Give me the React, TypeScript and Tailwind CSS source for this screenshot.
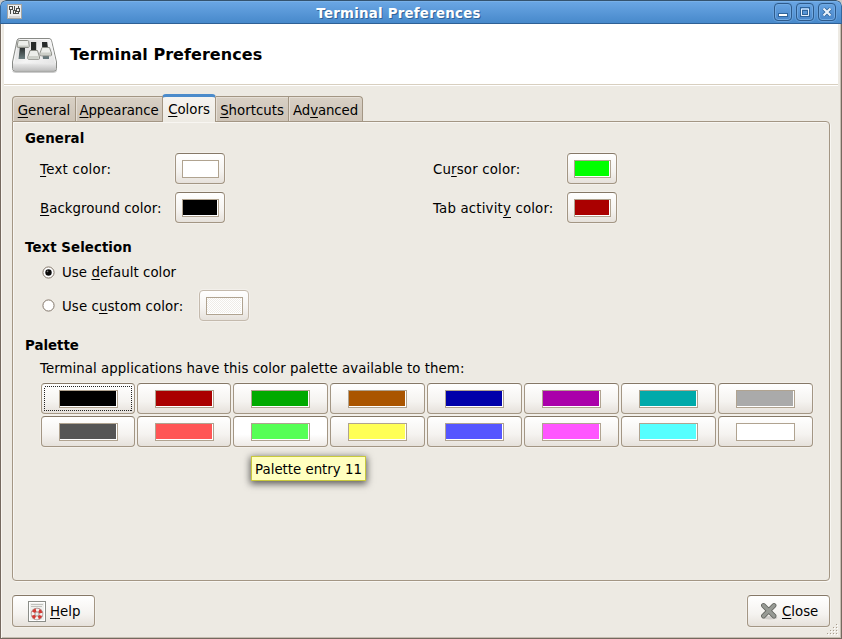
import React from "react";

type LabelProps = { text: string; hot?: number; low?: boolean; className?: string };

/** Text with one underlined access key. */
function Label({ text, hot = 0, low = false, className = "" }: LabelProps) {
  return (
    <span className={`whitespace-pre pt-[2px] ${className}`}>
      {text.slice(0, hot)}
      <span
        className={`underline decoration-1 [text-decoration-skip-ink:none] ${low ? "underline-offset-[4px]" : "underline-offset-[2px]"}`}
      >
        {text[hot]}
      </span>
      {text.slice(hot + 1)}
    </span>
  );
}

const buttonFace =
  "flex shrink-0 items-center rounded-[4px] border border-[#a39684] border-t-[#857867] bg-linear-to-b from-white via-[#f5f3f0] via-60% to-[#e6e1db] shadow-[0_0_0_1px_#f3f0eb]";

type SwatchProps = { color: string; name: string; className?: string; wide?: boolean; focused?: boolean; hover?: boolean; disabled?: boolean };

function ColorButton({ color, name, className = "", wide, focused, hover, disabled }: SwatchProps) {
  return (
    <button
      aria-label={name}
      disabled={disabled}
      className={`${buttonFace} relative h-[31px] ${wide ? "pl-[17px]" : "w-[50px] pl-[6px]"} ${hover ? "to-[#eeeae6] via-white" : ""} ${disabled ? "border-[#c4baad] border-t-[#c4baad]" : ""} ${className}`}
    >
      {focused && (
        <svg className="absolute left-[2px] top-[2px]" width="88" height="25" shapeRendering="crispEdges">
          <rect x="0.5" y="0.5" width="87" height="24" fill="none" stroke="#222" strokeDasharray="1 1" />
        </svg>
      )}
      <span
        className={`flex h-[18px] border border-[#b0a390] bg-white pr-px pb-px ${wide ? "w-[59px]" : "w-[37px]"}`}
      >
        <span
          className={`flex-1 ${disabled ? "bg-[repeating-conic-gradient(#efece7_0_25%,#ffffff_0_50%)] bg-[length:2px_2px]" : ""}`}
          style={disabled ? undefined : { backgroundColor: color }}
        />
      </span>
    </button>
  );
}

function Radio({ checked }: { checked?: boolean }) {
  return (
    <svg width="13" height="13" viewBox="0 0 13 13" className="shrink-0">
      <circle cx="6.5" cy="6.5" r="6.2" fill="#faf8f5" />
      <circle cx="6.5" cy="6.5" r="5.6" fill="#fff" stroke="#7d7163" strokeWidth="1" />
      {checked && <circle cx="6.5" cy="6.5" r="3.2" fill="#0b0b0b" />}
      {checked && <circle cx="5.5" cy="5.4" r=".8" fill="#777" />}
    </svg>
  );
}

function MixerIcon() {
  return (
    <svg width="48" height="40" viewBox="0 0 48 40" className="mt-[2px] shrink-0">
      <defs>
        <linearGradient id="top" x1="0" y1="0" x2="1" y2="1">
          <stop offset="0" stopColor="#cfcfcf" />
          <stop offset=".5" stopColor="#f4f4f4" />
          <stop offset="1" stopColor="#dedede" />
        </linearGradient>
        <linearGradient id="front" x1="0" y1="0" x2="0" y2="1">
          <stop offset="0" stopColor="#e9e9e9" />
          <stop offset="1" stopColor="#c0c0c0" />
        </linearGradient>
        <linearGradient id="slot" x1="0" y1="0" x2="0" y2="1">
          <stop offset="0" stopColor="#202322" />
          <stop offset="1" stopColor="#6e8082" />
        </linearGradient>
      </defs>
      <path d="M1 36h44l1-2v2q-1 2-4 2H5q-3 0-4-2z" fill="#000" opacity=".2" />
      <path
        d="M8.500 3.500h29.500q2 0 2.500 2L45.500 27v6.500q0 2.500-2.500 2.500h-39Q1.500 36 1.500 33.500V27L6 5.500q.5-2 2.500-2z"
        fill="url(#top)"
        stroke="#888a86"
      />
      <path d="M2 28.500h43v5q0 2-2 2h-39q-2 0-2-2z" fill="url(#front)" />
      <path d="M2.700 28 7.300 6q.3-1.500 1.600-1.500H37.700q1.500 0 1.900 1.500l4.900 22" fill="none" stroke="#fafafa" opacity=".8" />
      <path d="M9 11h5v13H7.500z" fill="url(#slot)" />
      <path d="M20 7h5.200v10h-5.200z" fill="#262a29" />
      <path d="M31 7h5.200l1 8h-6z" fill="#262a29" />
      <path d="M31.500 20h6.500v4h-6z" fill="#66787b" />
      <path d="M8 5.500h8.500q1 0 1.200 1l.5 4.500q0 1.500-1 1.500h-10q-1.300 0-1-1.500l.8-4.500q.2-1 1-1z" fill="#eceeea" stroke="#8c8e87" />
      <path d="M7 10.500h10.600v1.500H7z" fill="#c7cac3" />
      <path d="M19 15.500h7.500l2 6.500v1.500q0 .8-1 .8h-9.700q-1 0-1-.8V22z" fill="#eceeea" stroke="#8c8e87" />
      <path d="M17.300 21h10.400v2.700H17.300z" fill="#cdd0c9" />
      <path d="M31 12.500h7.500l2 5.700v1.800q0 .8-1 .8H30q-1 0-1-.8v-1.800z" fill="#eceeea" stroke="#8c8e87" />
      <path d="M29.600 17.500h10.400v2.700H29.600z" fill="#cdd0c9" />
    </svg>
  );
}

function TitleIcon() {
  return (
    <svg width="16" height="16" viewBox="0 0 16 16" shapeRendering="crispEdges">
      <rect x=".5" y=".5" width="14" height="14" fill="#eee" stroke="#a5a5a2" />
      <path d="M2 12h11v2H2z" fill="#d6d6d6" />
      <path d="M2.500 2.500h3v3h-3zM6.500 6.500h2v3h-2zM9.500 4.500h3v3h-3zM3.500 6v4M7.500 2v4M11.500 2v2M11.500 8v2M9 9.500h3" fill="none" stroke="#484a47" />
    </svg>
  );
}

function WindowButton({ name, children }: { name: string; children: React.ReactNode }) {
  return (
    <button
      aria-label={name}
      className="size-[18px] rounded-[4px] border border-[#2d5a8b] bg-linear-to-b from-[#67a4e2] to-[#4a87ca] shadow-[inset_0_0_0_1px_#70a9e2,0_0_0_1px_#66a0dc]"
    >
      <svg width="16" height="16" viewBox="0 0 16 16" fill="none">
        {children}
      </svg>
    </button>
  );
}

function HelpIcon() {
  return (
    <svg width="18" height="21" viewBox="0 0 18 21">
      <rect x=".5" y=".5" width="17" height="20" fill="#f0f0ee" stroke="#8b8d88" />
      <rect x="1.500" y="1.500" width="15" height="18" fill="none" stroke="#fff" />
      <path d="M3 3.500h12M3 5.500h11" stroke="#bbbcb8" strokeWidth=".9" />
      <circle cx="9" cy="13" r="4" fill="none" stroke="#a08482" strokeWidth="4.400" />
      <circle cx="9" cy="13" r="4" fill="none" stroke="#f6f1f0" strokeWidth="3.200" />
      <circle cx="9" cy="13" r="4" fill="none" stroke="#d33a34" strokeWidth="3.200" strokeDasharray="3.2 3.083" strokeDashoffset="-1.540" />
      <circle cx="9" cy="13" r="2" fill="#f0f0ee" stroke="#a08482" strokeWidth=".7" />
    </svg>
  );
}

function CloseIcon() {
  return (
    <svg width="18" height="18" viewBox="0 0 18 18">
      <ellipse cx="10" cy="15.800" rx="7.500" ry="1.700" fill="#000" opacity=".13" />
      <path d="M3.500 3.500l10.500 10.500M14 3.500L3.500 14" stroke="#5e605b" strokeWidth="4.800" strokeLinecap="round" />
      <path d="M3.500 3.500l10.500 10.500M14 3.500L3.500 14" stroke="#979a94" strokeWidth="3.200" strokeLinecap="round" />
    </svg>
  );
}

const tabFace =
  "flex h-[25px] items-center justify-center border border-b-0 border-[#a39684] bg-linear-to-b from-[#d8d0c5] to-[#cdc3b6] shadow-[inset_1px_1px_0_#e5ded5]";

const palette: [string, string][][] = [
  [
    ["#000000", "Palette entry 1"],
    ["#aa0000", "Palette entry 2"],
    ["#00aa00", "Palette entry 3"],
    ["#aa5500", "Palette entry 4"],
    ["#0000aa", "Palette entry 5"],
    ["#aa00aa", "Palette entry 6"],
    ["#00aaaa", "Palette entry 7"],
    ["#aaaaaa", "Palette entry 8"],
  ],
  [
    ["#555555", "Palette entry 9"],
    ["#ff5555", "Palette entry 10"],
    ["#55ff55", "Palette entry 11"],
    ["#ffff55", "Palette entry 12"],
    ["#5555ff", "Palette entry 13"],
    ["#ff55ff", "Palette entry 14"],
    ["#55ffff", "Palette entry 15"],
    ["#ffffff", "Palette entry 16"],
  ],
];

export default function App() {
  return (
    <div className="h-[639px] w-[842px] overflow-hidden bg-[#c9c9c9] font-['DejaVu_Sans',sans-serif] text-[13.333px] leading-[16px] text-black">
      <div className="flex h-full flex-col overflow-hidden rounded-t-[6px] bg-[#edeae3]">
        <header className="relative flex h-[24px] shrink-0 items-center justify-between rounded-t-[6px] border border-t-[#34536f] border-x-[#34679c] border-b-[#2f6095] bg-linear-to-b from-[#6ba7e5] to-[#4789cb] pr-[5px] pl-[6px] shadow-[inset_0_1px_0_#78b0e8]">
          <TitleIcon />
          <h1 className="absolute inset-x-0 left-[-45px] top-[5px] text-center font-bold tracking-[0.25px] text-white [text-shadow:1px_1px_0_#316397]">
            Terminal Preferences
          </h1>
          <div className="flex gap-[4px]">
            <WindowButton name="Minimize">
              <rect x="3.500" y="9.500" width="9" height="3" fill="#fff" stroke="#2f649b" />
            </WindowButton>
            <WindowButton name="Maximize">
              <rect x="3.500" y="3.500" width="9" height="9" stroke="#2f649b" />
              <path d="M4.500 5h7v6.500h-7z" stroke="#e8f1fb" />
              <rect x="5.500" y="6.500" width="5" height="4" stroke="#2f649b" />
            </WindowButton>
            <WindowButton name="Close window">
              <path d="M4.500 4.500l7 7M11.500 4.500l-7 7" stroke="#2f649b" strokeWidth="3.800" />
              <path d="M4.500 4.500l7 7M11.500 4.500l-7 7" stroke="#eaf2fc" strokeWidth="2.200" />
            </WindowButton>
          </div>
        </header>

        <div className="flex min-h-0 flex-1 flex-col border border-t-0 border-[#75695f] shadow-[inset_1px_0_0_#f9f6f1,inset_-1px_-1px_0_#c6beb2]">
          <div className="mr-[3px] ml-[3px] flex h-[61px] shrink-0 items-center border-b border-[#d8cfbf] bg-white pl-[7px] shadow-[0_1px_0_#fff]">
            <MixerIcon />
            <h2 className="ml-[11px] pt-[2px] text-[16px] leading-[20px] font-bold tracking-[0.05px]">Terminal Preferences</h2>
          </div>

          <nav className="relative z-10 mt-[9px] ml-[11px] flex h-[28px] shrink-0 items-end">
            <div className={`${tabFace} mb-[1px] w-[64px] rounded-tl-[4px]`}>
              <Label text="General" className="pt-[4px]" />
            </div>
            <div className={`${tabFace} mb-[1px] w-[87px] border-l-0`}>
              <Label text="Appearance" className="pt-[4px] tracking-[-0.1px]" />
            </div>
            <div className="flex h-[28px] w-[54px] -ml-px items-center justify-center rounded-t-[4px] border border-t-[3px] border-b-0 border-[#a39684] border-t-[#4b8bcb] bg-linear-to-b from-[#f6f4f0] to-[#edeae3]">
              <Label text="Colors" className="pt-0 pb-[1px]" />
            </div>
            <div className={`${tabFace} mb-[1px] w-[73px] border-l-0`}>
              <Label text="Shortcuts" className="pt-[4px]" />
            </div>
            <div className={`${tabFace} mb-[1px] w-[74px] rounded-tr-[4px] border-l-0`}>
              <Label text="Advanced" hot={2} className="pt-[4px] tracking-[-0.1px]" />
            </div>
          </nav>

          <main className="-mt-px ml-[11px] flex h-[460px] w-[818px] shrink-0 flex-col rounded-[4px] rounded-tl-none border border-[#a39684] pt-[9px] pl-[12px] shadow-[inset_1px_1px_0_#f8f6f2,1px_1px_0_#f8f6f2]">
            <h3 className="font-bold tracking-[0.1px]">General</h3>
            <div className="mt-[6px] grid grid-cols-[135px_258px_134px_50px] gap-y-[8px] pl-[15px]">
              <Label text="Text color:" className="self-center tracking-[0.27px]" />
              <ColorButton color="#ffffff" name="Text color" />
              <Label text="Cursor color:" hot={2} className="self-center tracking-[0.17px]" />
              <ColorButton color="#00ff00" name="Cursor color" />
              <Label text="Background color:" className="self-center tracking-[0.04px]" />
              <ColorButton color="#000000" name="Background color" />
              <Label text="Tab activity color:" hot={11} low className="self-center tracking-[0.17px]" />
              <ColorButton color="#aa0000" name="Tab activity color" />
            </div>

            <h3 className="mt-[17px] font-bold tracking-[0.08px]">Text Selection</h3>
            <div className="mt-[8px] flex h-[16px] items-center gap-[7px] pl-[17px]">
              <Radio checked />
              <Label text="Use default color" hot={4} className="tracking-[0.06px]" />
            </div>
            <div className="mt-[10px] flex items-center pl-[17px]">
              <Radio />
              <Label text="Use custom color:" hot={5} className="ml-[7px] w-[137px] tracking-[0.1px]" />
              <ColorButton color="#f7f5f2" name="Custom color" disabled />
            </div>

            <h3 className="mt-[17px] font-bold">Palette</h3>
            <p className="mt-[7px] pl-[15px] tracking-[0.06px]">
              Terminal applications have this color palette available to them:
            </p>
            <div className="mt-[6px] grid grid-cols-[94px_94px_repeat(6,95px)] gap-[2px] pl-[16px]">
              {palette.flat().map(([color, name], i) => (
                <ColorButton key={name} color={color} name={name} wide focused={i === 0} hover={i === 10} />
              ))}
            </div>
          </main>

          <footer className="relative mt-[14px] flex justify-between pr-[11px] pl-[11px]">
            <button className={`${buttonFace} h-[32px] w-[83px] pl-[15px]`}>
              <HelpIcon />
              <Label text="Help" className="ml-[4px]" />
            </button>
            <button className={`${buttonFace} h-[32px] w-[83px] pl-[12px]`}>
              <CloseIcon />
              <Label text="Close" className="ml-[4px]" />
            </button>
            <svg className="absolute right-[2px] top-[28px]" width="13" height="13" viewBox="0 0 13 13" shapeRendering="crispEdges">
              <path d="M10 1h1M10 4h1M7 4h1M10 7h1M7 7h1M4 7h1M10 10h1M7 10h1M4 10h1M1 10h1" transform="translate(0 .5)" stroke="#a89d8e" />
              <path d="M11 2h1M11 5h1M8 5h1M11 8h1M8 8h1M5 8h1M11 11h1M8 11h1M5 11h1M2 11h1" transform="translate(0 .5)" stroke="#fff" />
            </svg>
          </footer>
        </div>
      </div>

      <div
        role="tooltip"
        className="absolute top-[456px] left-[251px] flex h-[25px] w-[115px] items-center justify-center border border-[#c9c93c] bg-[#ffffbf] pt-[2px] whitespace-nowrap shadow-[0_2px_7px_1px_rgba(0,0,0,0.6)]"
      >
        Palette entry 11
      </div>
    </div>
  );
}
